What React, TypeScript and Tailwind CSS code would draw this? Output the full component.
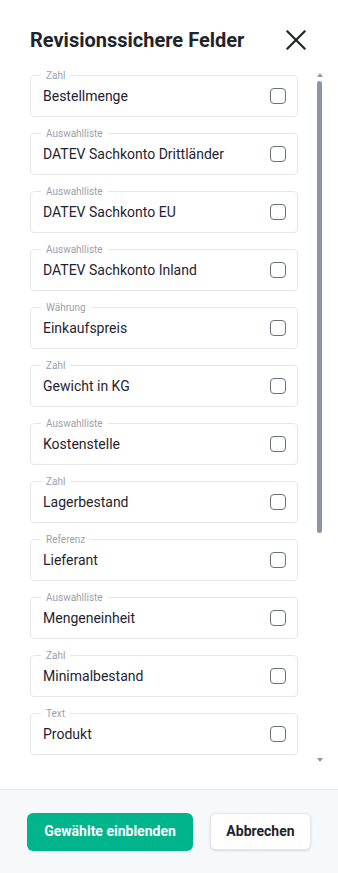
const fields: { type: string; label: string }[] = [
  { type: "Zahl", label: "Bestellmenge" },
  { type: "Auswahlliste", label: "DATEV Sachkonto Drittländer" },
  { type: "Auswahlliste", label: "DATEV Sachkonto EU" },
  { type: "Auswahlliste", label: "DATEV Sachkonto Inland" },
  { type: "Währung", label: "Einkaufspreis" },
  { type: "Zahl", label: "Gewicht in KG" },
  { type: "Auswahlliste", label: "Kostenstelle" },
  { type: "Zahl", label: "Lagerbestand" },
  { type: "Referenz", label: "Lieferant" },
  { type: "Auswahlliste", label: "Mengeneinheit" },
  { type: "Zahl", label: "Minimalbestand" },
  { type: "Text", label: "Produkt" },
];

function FieldCard({ type, label }: { type: string; label: string }) {
  return (
    <fieldset className="min-w-0 rounded-[4px] border border-[#e6e7eb] pb-[10px] pl-[12px] pr-[11px] pt-[5px]">
      <legend className="-ml-[2px] px-[5px] text-[10px] leading-[11px] text-[#9a9fab]">
        {type}
      </legend>
      <div className="flex items-center justify-between">
        <span className="text-[14px] leading-[20px] text-[#1f2430]">{label}</span>
        <span className="h-[16px] w-[16px] rounded-[4px] border-[1.5px] border-[#6b7080] bg-white" />
      </div>
    </fieldset>
  );
}

function CloseIcon() {
  return (
    <svg width="20" height="20" viewBox="0 0 20 20" className="text-[#222428]" aria-hidden>
      <path d="M1.5 1.5 L18.5 18.5 M18.5 1.5 L1.5 18.5" stroke="currentColor" strokeWidth="2.2" strokeLinecap="square" />
    </svg>
  );
}

export default function App() {
  return (
    <div className="flex h-[873px] w-[338px] flex-col bg-white font-['Roboto',sans-serif]">
      <header className="flex items-center justify-between pl-[30px] pr-[32px] pt-[28px]">
        <h1 className="text-[20px] font-bold leading-[24px] text-[#222428]">
          Revisionssichere Felder
        </h1>
        <CloseIcon />
      </header>

      <div className="flex min-h-0 flex-1 pt-[18px]">
        <div className="ml-[30px] flex h-[697px] w-[268px] flex-col gap-[11px] overflow-hidden">
          {fields.map((f) => (
            <FieldCard key={f.label} type={f.type} label={f.label} />
          ))}
        </div>
        <div className="ml-[18px] flex w-[7px] flex-col items-center pt-[3px]">
          <span className="h-0 w-0 border-x-[3.5px] border-b-[4px] border-x-transparent border-b-[#9397a6]" />
          <span className="mt-[4px] h-[452px] w-[5px] rounded-full bg-[#8f93a6]" />
          <span className="mt-[225px] h-0 w-0 border-x-[3.5px] border-t-[4px] border-x-transparent border-t-[#9397a6]" />
        </div>
      </div>

      <footer className="flex h-[84px] items-center gap-[17px] border-t border-[#e6e7eb] bg-[#f7f8fa] pl-[27px]">
        <button className="h-[38px] w-[166px] rounded-[6px] bg-[#00b48c] text-[14px] font-bold text-white">
          Gewählte einblenden
        </button>
        <button className="h-[37px] w-[101px] rounded-[6px] border border-[#e6e7eb] bg-white text-[14px] font-bold text-[#222428] shadow-sm">
          Abbrechen
        </button>
      </footer>
    </div>
  );
}
